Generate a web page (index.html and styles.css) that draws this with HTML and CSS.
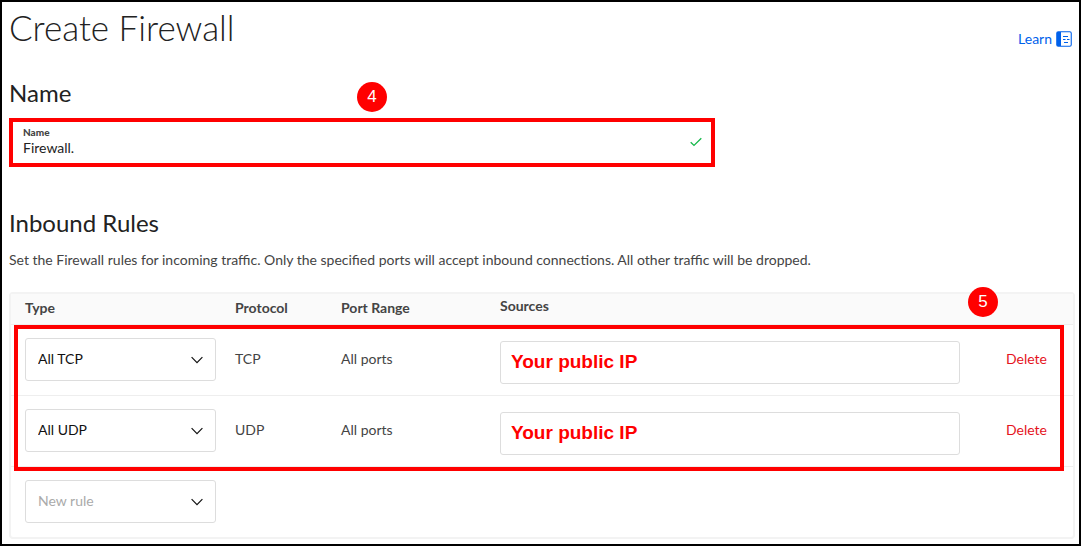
FILE: index.html
```html
<!DOCTYPE html>
<html lang="en">
<head>
<meta charset="utf-8">
<title>Create Firewall</title>
<link rel="stylesheet" href="styles.css">
</head>
<body>
<main class="page">
  <header class="page-header">
    <h1 class="title">Create Firewall</h1>
    <a class="learn" href="#">Learn
      <svg class="learn-icon" viewBox="0 0 16 16" aria-hidden="true">
        <rect x="0.75" y="0.75" width="14.5" height="14.5" rx="1.5" fill="#fff" stroke="#0061eb" stroke-width="1.1"/>
        <path d="M1 1h4v14H1z" fill="#0061eb"/>
        <path d="M7 5.5h5M7 8.5h2.5M11 8.5h2.5M8 11.5h4" stroke="#0061eb" stroke-width="1"/>
      </svg>
    </a>
  </header>

  <section class="name-section">
    <h2 class="heading">Name</h2>
    <span class="badge badge-name">4</span>
    <div class="name-field">
      <div class="name-text">
        <label class="name-label" for="fw-name">Name</label>
        <input class="name-input" id="fw-name" type="text" value="Firewall.">
      </div>
      <svg class="check" viewBox="0 0 12 10" aria-hidden="true"><path d="M0.7 5.2 4 8.4 11.3 1.2" fill="none" stroke="#15b84a" stroke-width="1.3"/></svg>
    </div>
  </section>

  <section class="rules-section">
    <h2 class="heading">Inbound Rules</h2>
    <p class="intro">Set the Firewall rules for incoming traffic. Only the specified ports will accept inbound connections. All other traffic will be dropped.</p>
    <div class="rules">
      <table class="rules-table">
        <colgroup><col class="col-type"><col class="col-protocol"><col class="col-ports"><col><col class="col-action"></colgroup>
        <thead>
          <tr><th>Type</th><th>Protocol</th><th>Port Range</th><th class="sources-head">Sources</th><th></th></tr>
        </thead>
        <tbody>
          <tr>
            <td><div class="select-box"><select class="select" aria-label="Rule type"><option>All TCP</option></select><svg class="chevron" viewBox="0 0 12 8" aria-hidden="true"><path d="M0.6 1.2 6 6.6 11.4 1.2"/></svg></div></td>
            <td>TCP</td><td>All ports</td>
            <td><input class="source" type="text" aria-label="Sources" value="Your public IP"></td>
            <td><button class="delete" type="button">Delete</button></td>
          </tr>
          <tr>
            <td><div class="select-box"><select class="select" aria-label="Rule type"><option>All UDP</option></select><svg class="chevron" viewBox="0 0 12 8" aria-hidden="true"><path d="M0.6 1.2 6 6.6 11.4 1.2"/></svg></div></td>
            <td>UDP</td><td>All ports</td>
            <td><input class="source" type="text" aria-label="Sources" value="Your public IP"></td>
            <td><button class="delete" type="button">Delete</button></td>
          </tr>
          <tr>
            <td><div class="select-box"><select class="select select-empty" aria-label="New rule"><option>New rule</option></select><svg class="chevron" viewBox="0 0 12 8" aria-hidden="true"><path d="M0.6 1.2 6 6.6 11.4 1.2"/></svg></div></td>
            <td></td><td></td><td></td><td></td>
          </tr>
        </tbody>
      </table>
      <div class="highlight"></div>
      <span class="badge badge-rules">5</span>
    </div>
  </section>
</main>
</body>
</html>
```
FILE: styles.css
```css
* { box-sizing: border-box; }
body {
  margin: 0;
  background: #fff;
  color: #444;
  font: 14px/20px Lato, "Open Sans", sans-serif;
}
.page {
  min-height: 100vh;
  padding: 4px 4px 5px 7px;
  border: 2px solid #000;
}
.page-header {
  display: flex;
  justify-content: space-between;
  align-items: flex-end;
}
.title {
  margin: 0;
  color: #222;
  font-size: 35px;
  line-height: 43px;
  font-weight: 300;
}
.learn {
  display: flex;
  align-items: center;
  gap: 4px;
  padding-right: 3px;
  color: #0061eb;
  text-decoration: none;
}
.learn-icon { width: 16px; height: 16px; }
.heading {
  margin: 0;
  color: #222;
  font-size: 24px;
  line-height: 32px;
  font-weight: 400;
}
.name-section { position: relative; margin-top: 28px; }
.name-field {
  display: flex;
  align-items: center;
  justify-content: space-between;
  max-width: 706px;
  height: 49px;
  margin-top: 9px;
  padding: 0 9px 2px 10px;
  border: 4px solid #f00;
}
.name-text { flex: 1; }
.name-label {
  display: block;
  font-size: 10px;
  line-height: 12px;
  font-weight: 900;
}
.name-input {
  display: block;
  width: 100%;
  height: 20px;
  padding: 0;
  border: 0;
  outline: 0;
  background: none;
  color: #222;
  font: inherit;
}
.check { width: 12px; height: 10px; }
.badge {
  position: absolute;
  width: 30px;
  height: 30px;
  border-radius: 50%;
  background: #f00;
  color: #fff;
  font: 17px/30px "Liberation Sans", Arial, sans-serif;
  text-align: center;
}
.badge-name { top: 5px; left: 348px; }
.badge-rules { top: -7px; right: 75px; }
.rules-section { margin-top: 40px; }
.intro { margin: 11px 0 22px; }
.rules {
  position: relative;
  border: 2px solid #f3f3f3;
  border-radius: 4px;
}
.rules-table {
  width: 100%;
  border-collapse: collapse;
  table-layout: fixed;
}
.col-type { width: 224px; }
.col-protocol { width: 106px; }
.col-ports { width: 159px; }
.col-action { width: 113px; }
.rules-table th {
  height: 30px;
  padding: 0 0 2px;
  border-bottom: 1px solid #eee;
  background: #fafafa;
  font-weight: 700;
  text-align: left;
}
.rules-table .sources-head { padding-bottom: 6px; }
.rules-table td { height: 71px; padding: 0 0 2px; }
.rules-table tr + tr td { border-top: 1px solid #eee; }
.rules-table th:first-child { padding-left: 14px; }
.rules-table td:first-child { padding: 0 0 0 14px; }
.rules-table td:last-child { padding-right: 26px; text-align: right; }
.select-box { position: relative; width: 191px; }
.select {
  display: block;
  width: 100%;
  height: 43px;
  padding: 0 32px 2px 12px;
  appearance: none;
  border: 1px solid #ddd;
  border-radius: 3px;
  background: #fff;
  color: #111;
  font: inherit;
}
.select-empty { color: #aaa; }
.chevron {
  position: absolute;
  top: 18px;
  right: 13px;
  width: 12px;
  height: 8px;
  fill: none;
  stroke: #111;
  stroke-width: 1.2;
  pointer-events: none;
}
.source {
  display: block;
  width: 100%;
  height: 43px;
  margin-top: 8px;
  padding: 0 10px 2px;
  border: 1px solid #ddd;
  border-radius: 3px;
  background: #fff;
  color: #f00;
  font: bold 19px "Liberation Sans", Arial, sans-serif;
}
.delete {
  padding: 0;
  border: 0;
  background: none;
  color: #e5131d;
  font: inherit;
}
.highlight {
  position: absolute;
  top: 31px;
  right: 9px;
  left: 3px;
  height: 146px;
  border: 4px solid #f00;
  pointer-events: none;
}
```
